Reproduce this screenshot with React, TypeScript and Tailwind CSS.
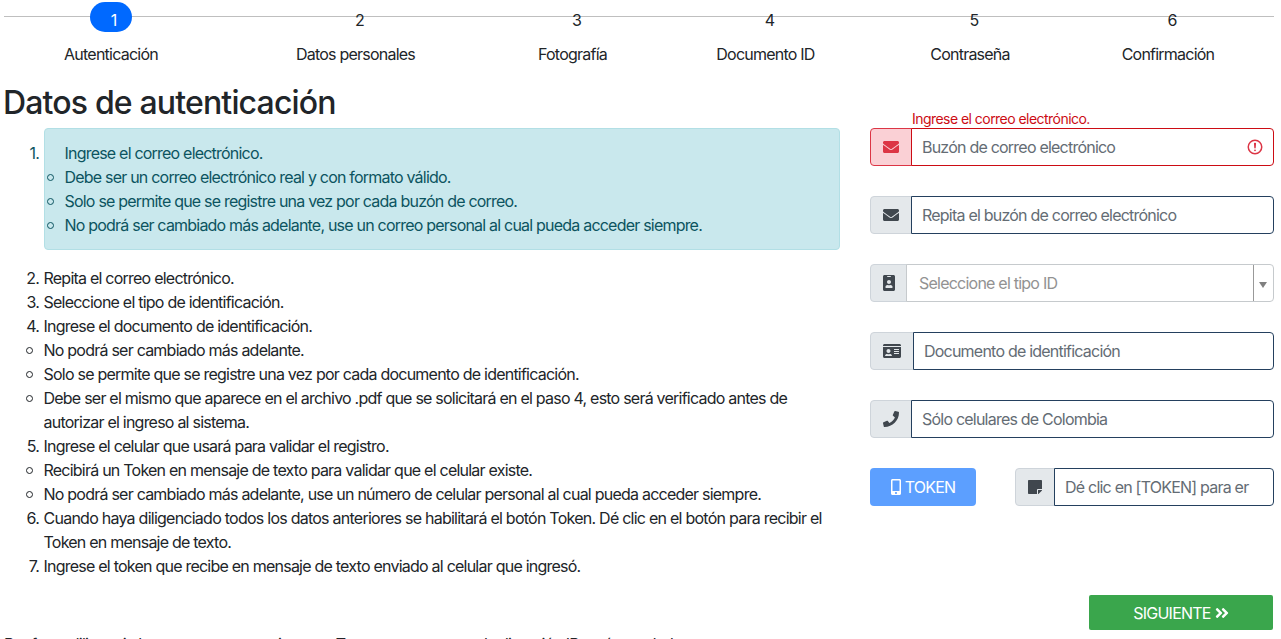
import React from "react";
import {
  FaAngleDoubleRight,
  FaEnvelope,
  FaIdBadge,
  FaIdCard,
  FaMobileAlt,
  FaPhone,
  FaStickyNote,
} from "react-icons/fa";

const steps = [
  { n: 1, label: "Autenticación", width: "w-[214px]" },
  { n: 2, label: "Datos personales", width: "w-[275px]" },
  { n: 3, label: "Fotografía", width: "w-[159px]" },
  { n: 4, label: "Documento ID", width: "w-[227px]" },
  { n: 5, label: "Contraseña", width: "w-[182px]" },
  { n: 6, label: "Confirmación", width: "w-[214px]" },
];

function Stepper() {
  return (
    <nav className="relative flex h-[70px] pl-1">
      <div className="absolute top-4 left-1 h-px w-[1270px] bg-[#bfbfbf]" />
      {steps.map((s) => (
        <div key={s.n} className={`relative flex shrink-0 flex-col items-center pt-0.5 ${s.width}`}>
          <div
            className={`flex h-[30px] w-[42px] items-center justify-center rounded-[15px] pt-1.5 ${
              s.n === 1 ? "bg-[#0069ff] pl-[5px] text-white" : "pl-[8px]"
            }`}
          >
            {s.n}
          </div>
          <div className="mt-[10px] whitespace-nowrap">{s.label}</div>
        </div>
      ))}
    </nav>
  );
}

function Item({ n, children }: { n?: number; children: React.ReactNode }) {
  return (
    <li className="flex">
      {n ? (
        <span className="w-[39.5px] shrink-0 pr-[4.5px] text-right">{n}.</span>
      ) : (
        <span className="w-[39.5px] shrink-0 pt-[9px] pl-[22px]">
          <span className="block size-[7px] rounded-full border border-current" />
        </span>
      )}
      <span className="whitespace-nowrap">{children}</span>
    </li>
  );
}

function AlertItem({ bullet = true, children }: { bullet?: boolean; children: React.ReactNode }) {
  return (
    <div className="flex">
      <span className="w-[19.5px] shrink-0 pt-[9px] pl-[2px]">
        {bullet && <span className="block size-[7px] rounded-full border border-current" />}
      </span>
      <span className="tracking-[-0.79px] whitespace-nowrap">{children}</span>
    </div>
  );
}

function Field({
  icon,
  placeholder,
  invalid = false,
}: {
  icon: React.ReactNode;
  placeholder: string;
  invalid?: boolean;
}) {
  return (
    <div className="flex h-[38px] min-w-0 flex-1">
      <span
        className={`flex shrink-0 items-center rounded-l border px-3 ${
          invalid ? "border-[#dc3545] bg-[#fad0d5] text-[#dc3545]" : "border-[#ced4da] bg-[#e4e8eb] text-[#40474e]"
        }`}
      >
        {icon}
      </span>
      <div
        className={`-ml-px flex min-w-0 flex-1 items-center rounded-r border bg-white pr-[9px] pl-[10px] ${
          invalid ? "border-[#cc0c14]" : "border-[#24405e]"
        }`}
      >
        <input
          placeholder={placeholder}
          className="min-w-0 flex-1 bg-transparent tracking-[-0.78px] outline-none placeholder:text-[#646c74]"
        />
        {invalid && (
          <svg viewBox="0 0 12 12" className="size-[18px] text-[#dc3545]" fill="none" stroke="currentColor">
            <circle cx="6" cy="6" r="4.5" />
            <path strokeLinejoin="round" d="M5.8 3.6h.4L6 6.5z" />
            <circle cx="6" cy="8.2" r=".6" fill="currentColor" stroke="none" />
          </svg>
        )}
      </div>
    </div>
  );
}

export default function App() {
  return (
    <div className="h-[639px] w-[1281px] overflow-hidden bg-white font-['Inter','Liberation_Sans',sans-serif] text-[16px] leading-6 tracking-[-0.77px] text-[#212529]">
      <Stepper />
      <div className="flex h-[560px]">
        <section className="w-[840px] shrink-0 pl-1">
          <h1 className="mt-[14px] -ml-px h-[44px] text-[32px] leading-[38px] font-medium tracking-[-0.84px] whitespace-nowrap">
            Datos de autenticación
          </h1>
          <ol>
            <li className="mb-4 flex text-[#0c5460]">
              <span className="w-[40px] shrink-0 pt-[13px] pr-[5px] text-right">1.</span>
              <div className="h-[122px] w-[796px] rounded border border-[#b2dfe5] bg-[#c9e8ed] pt-[12px]">
                <AlertItem bullet={false}>Ingrese el correo electrónico.</AlertItem>
                <AlertItem>Debe ser un correo electrónico real y con formato válido.</AlertItem>
                <AlertItem>Solo se permite que se registre una vez por cada buzón de correo.</AlertItem>
                <AlertItem>
                  No podrá ser cambiado más adelante, use un correo personal al cual pueda acceder siempre.
                </AlertItem>
              </div>
            </li>
            <Item n={2}>Repita el correo electrónico.</Item>
            <Item n={3}>Seleccione el tipo de identificación.</Item>
            <Item n={4}>Ingrese el documento de identificación.</Item>
            <Item>No podrá ser cambiado más adelante.</Item>
            <Item>Solo se permite que se registre una vez por cada documento de identificación.</Item>
            <Item>
              Debe ser el mismo que aparece en el archivo .pdf que se solicitará en el paso 4, esto será verificado antes de
              <br />
              autorizar el ingreso al sistema.
            </Item>
            <Item n={5}>Ingrese el celular que usará para validar el registro.</Item>
            <Item>Recibirá un Token en mensaje de texto para validar que el celular existe.</Item>
            <Item>No podrá ser cambiado más adelante, use un número de celular personal al cual pueda acceder siempre.</Item>
            <Item n={6}>
              <span className="tracking-[-0.75px]">
                Cuando haya diligenciado todos los datos anteriores se habilitará el botón Token. Dé clic en el botón para recibir el
              </span>
              <br />
              Token en mensaje de texto.
            </Item>
            <Item n={7}>Ingrese el token que recibe en mensaje de texto enviado al celular que ingresó.</Item>
          </ol>
        </section>

        <form className="ml-[30px] flex w-[404px] shrink-0 flex-col">
          <div className="mt-[38px] h-5 pl-[42px] text-[14px] leading-[21px] tracking-[-0.54px] text-[#cc0c14]">
            Ingrese el correo electrónico.
          </div>
          <div className="flex flex-col gap-[30px]">
            <div className="flex">
              <Field invalid icon={<FaEnvelope />} placeholder="Buzón de correo electrónico" />
            </div>
            <div className="flex">
              <Field icon={<FaEnvelope />} placeholder="Repita el buzón de correo electrónico" />
            </div>
            <div className="flex h-[38px]">
              <span className="flex items-center rounded-l border border-[#ced4da] bg-[#e4e8eb] px-3 text-[#40474e]">
                <FaIdBadge className="w-3" />
              </span>
              <div className="-ml-[2px] flex flex-1 rounded-r border border-[#c6cacd] bg-white">
                <span className="flex flex-1 items-center pl-[12px] text-[#929292]">Seleccione el tipo ID</span>
                <span className="flex w-5 items-center justify-center border-l border-[#999] pt-1 pr-[2px]">
                  <svg viewBox="0 0 8 6" className="h-[6px] w-[8px]">
                    <path d="M0 0h8L4 6z" fill="#808080" />
                  </svg>
                </span>
              </div>
            </div>
            <div className="flex">
              <Field icon={<FaIdCard className="w-[18px]" />} placeholder="Documento de identificación" />
            </div>
            <div className="flex">
              <Field icon={<FaPhone />} placeholder="Sólo celulares de Colombia" />
            </div>
            <div className="flex">
              <button
                type="button"
                className="mr-[39px] flex h-[38px] w-[106px] items-center justify-center gap-[4px] rounded bg-[#5c9fff] text-white"
              >
                <FaMobileAlt className="w-[10px]" />
                <span>TOKEN</span>
              </button>
              <Field icon={<FaStickyNote className="w-[14px]" />} placeholder="Dé clic en [TOKEN] para er" />
            </div>
          </div>
          <button
            type="button"
            className="mt-[89px] ml-[219px] flex h-9 w-[184px] items-center justify-center gap-[4px] rounded-[2px] bg-[#3aa64c] text-white"
          >
            <span>SIGUIENTE</span>
            <FaAngleDoubleRight className="w-[14px]" />
          </button>
        </form>
      </div>
      <p className="mt-[2px] pl-1 whitespace-nowrap">
        Por favor diligencie los campos para registrarse. Tenga en cuenta que la dirección IP será guardada.
      </p>
    </div>
  );
}
